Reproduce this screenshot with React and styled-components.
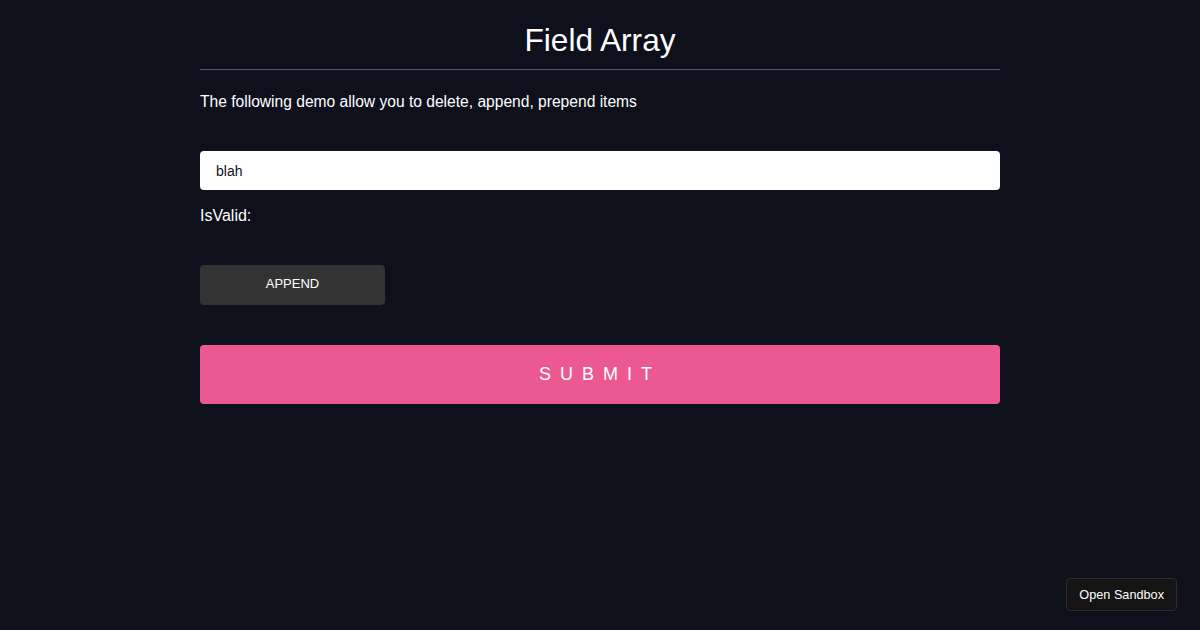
import React from "react";
import styled, { createGlobalStyle } from "styled-components";

const GlobalStyle = createGlobalStyle`
  body {
    margin: 0;
    background: #0e101c;
    color: #fff;
    font-family: "Liberation Sans", Arial, sans-serif;
  }
`;

const Page = styled.div`
  width: 800px;
  margin: 0 auto;
  padding-top: 20px;
`;

const Title = styled.h1`
  margin: 0;
  padding-bottom: 9px;
  font-size: 31.6px;
  font-weight: 400;
  line-height: 40px;
  text-align: center;
  border-bottom: 1px solid #4f5670;
`;

const Intro = styled.p`
  margin: 22px 0 39px;
  font-size: 15.6px;
  line-height: 20px;
`;

const Form = styled.form`
  display: flex;
  flex-direction: column;
  align-items: flex-start;
`;

const TextInput = styled.input`
  box-sizing: border-box;
  width: 100%;
  height: 39px;
  padding: 0 16px;
  border: 0;
  border-radius: 4px;
  background: #fff;
  color: #0e101c;
  font-family: inherit;
  font-size: 14px;
  outline: none;
`;

const Status = styled.p`
  margin: 16px 0 39px;
  font-size: 16px;
  line-height: 20px;
`;

const Button = styled.button`
  box-sizing: border-box;
  border: 0;
  border-radius: 4px;
  color: #fff;
  font-family: inherit;
  cursor: pointer;
  background: ${(p) => (p.$primary ? "#ec5990" : "#333333")};
  width: ${(p) => (p.$primary ? "100%" : "185px")};
  height: ${(p) => (p.$primary ? "59px" : "40px")};
  font-size: ${(p) => (p.$primary ? "18px" : "13px")};
  letter-spacing: ${(p) => (p.$primary ? "9px" : "0")};
  padding: ${(p) => (p.$primary ? "0" : "0 0 3px")};
  text-transform: uppercase;
  margin-bottom: 40px;
`;

const SandboxLink = styled.a`
  position: fixed;
  right: 23px;
  bottom: 19px;
  box-sizing: border-box;
  height: 33px;
  padding: 0 12px;
  display: flex;
  align-items: center;
  background: #141414;
  border: 1px solid #2e2a2e;
  border-radius: 4px;
  color: #fff;
  font-size: 12.7px;
  text-decoration: none;
`;

export default function App() {
  return (
    <>
      <GlobalStyle />
      <Page>
        <Title>Field Array</Title>
        <Intro>The following demo allow you to delete, append, prepend items</Intro>
        <Form onSubmit={(e) => e.preventDefault()}>
          <TextInput defaultValue="blah" name="test[0].value" />
          <Status>IsValid: </Status>
          <Button type="button">Append</Button>
          <Button type="submit" $primary>Submit</Button>
        </Form>
      </Page>
      <SandboxLink href="#">Open Sandbox</SandboxLink>
    </>
  );
}
